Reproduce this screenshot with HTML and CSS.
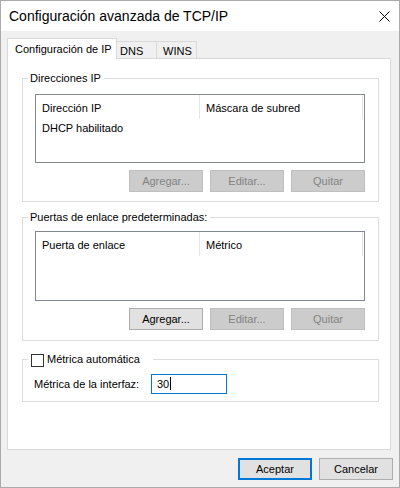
FILE: index.html
```html
<!DOCTYPE html>
<html lang="es">
<head>
    <meta charset="UTF-8">
    <title>Configuración avanzada de TCP/IP</title>
    <meta name="viewport" content="width=device-width">
    <link rel="stylesheet" href="styles.css">
</head>
<body>
    <div class="window">
        <div class="titlebar">
            <span class="title">Configuración avanzada de TCP/IP</span>
            <svg class="close" width="11" height="11" viewBox="0 0 11 11">
                <path d="M0.5 0.5 L10.5 10.5 M10.5 0.5 L0.5 10.5" stroke="#000" stroke-width="1" fill="none"/>
            </svg>
        </div>

        <div class="body">
            <div class="tabs">
                <div class="tab active">Configuración de IP</div>
                <div class="tab tab-dns">DNS</div>
                <div class="tab tab-wins">WINS</div>
            </div>

            <div class="panel">
                <fieldset class="group group-ip">
                    <legend>Direcciones IP</legend>
                    <div class="group-inner">
                        <div class="list list-ip">
                            <div class="list-head">
                                <span class="col col-a">Dirección IP</span>
                                <span class="col col-b">Máscara de subred</span>
                            </div>
                            <div class="list-row">DHCP habilitado</div>
                        </div>
                        <div class="btn-row">
                            <button class="btn" disabled>Agregar...</button>
                            <button class="btn" disabled>Editar...</button>
                            <button class="btn" disabled>Quitar</button>
                        </div>
                    </div>
                </fieldset>

                <fieldset class="group group-gw">
                    <legend>Puertas de enlace predeterminadas:</legend>
                    <div class="group-inner">
                        <div class="list list-gw">
                            <div class="list-head">
                                <span class="col col-a">Puerta de enlace</span>
                                <span class="col col-b">Métrico</span>
                            </div>
                        </div>
                        <div class="btn-row">
                            <button class="btn">Agregar...</button>
                            <button class="btn" disabled>Editar...</button>
                            <button class="btn" disabled>Quitar</button>
                        </div>
                    </div>
                </fieldset>

                <fieldset class="group group-metric">
                    <legend class="check-legend">
                        <span class="check"></span>
                        <span>Métrica automática</span>
                    </legend>
                    <div class="group-inner metric-row">
                        <label for="input-metric" class="metric-label">Métrica de la interfaz:</label>
                        <div class="metric-input" id="input-metric">30<span class="caret"></span></div>
                    </div>
                </fieldset>
            </div>

            <div class="footer">
                <button class="btn btn-default">Aceptar</button>
                <button class="btn">Cancelar</button>
            </div>
        </div>
    </div>
</body>
</html>
```

FILE: styles.css
```css
*,
*::after,
*::before{
    padding: 0;
    margin: 0;
    box-sizing: border-box;
}
html{
    font: normal 11px/15px "Liberation Sans", sans-serif;
    color: #000;
}
body{
    background: #fff;
}
.window{
    width: 400px;
    height: 488px;
    border: 1px solid #aaaaaa;
    display: flex;
    flex-direction: column;
}
.titlebar{
    height: 30px;
    background: #fff;
    display: flex;
    align-items: center;
    justify-content: space-between;
    padding: 0 9px 0 8px;
}
.title{
    font-size: 14px;
}
.close{
    display: block;
}
.body{
    flex: 1;
    background: #f0f0f0;
    padding: 7px 6px 0 6px;
}

/* tabs */
.tabs{
    display: flex;
    align-items: flex-end;
    height: 20px;
}
.tab{
    height: 17px;
    background: #f0f0f0;
    border: 1px solid #d9d9d9;
    border-left: none;
    border-bottom: none;
    padding-top: 2px;
    white-space: nowrap;
}
.tab.active{
    height: 21px;
    width: 110px;
    margin-bottom: -1px;
    border-left: 1px solid #d9d9d9;
    background: #fff;
    padding: 3px 0 0 7px;
    position: relative;
    z-index: 1;
}
.tab-dns{
    width: 40px;
    padding-left: 3px;
}
.tab-wins{
    width: 40px;
    padding-left: 6px;
}
.panel{
    width: 384px;
    height: 392px;
    background: #fff;
    border: 1px solid #d9d9d9;
    padding: 0 11px 0 14px;
}

/* group boxes */
.group{
    border: 1px solid #dcdcdc;
    padding: 0;
    min-width: 0;
}
.group legend{
    margin-left: 5px;
    padding: 0 3px 0 2px;
    line-height: 15px;
}
.group-inner{
    padding: 0 13px 9px 12px;
}
.group-ip{
    margin-top: 12px;
}
.group-gw{
    margin-top: 8px;
}
.group-gw .group-inner{
    padding-bottom: 10px;
}
.group-metric{
    margin-top: 11px;
}
.group .check-legend{
    display: flex;
    align-items: center;
    padding: 0 13px 0 3px;
}
.check{
    width: 13px;
    height: 13px;
    border: 1px solid #333;
    background: #fff;
    margin-right: 3px;
    margin-top: 1px;
}

/* list views */
.list{
    border: 1px solid #828790;
    background: #fff;
}
.list-ip{
    margin-top: 8px;
    height: 69px;
}
.list-gw{
    margin-top: 6px;
    height: 70px;
}
.list-head{
    display: flex;
    height: 24px;
}
.col{
    border-right: 1px solid #e5e5e5;
    padding: 6px 0 0 6px;
}
.col-a{
    width: 164px;
}
.col-b{
    width: 163px;
}
.list-row{
    padding: 2px 0 0 6px;
}

/* buttons */
.btn-row{
    display: flex;
    justify-content: flex-end;
    gap: 7px;
    margin-top: 7px;
}
.btn{
    width: 74px;
    height: 22px;
    font: inherit;
    color: #000;
    background: #e1e1e1;
    border: 1px solid #adadad;
}
.btn:disabled{
    background: #cccccc;
    border-color: #bfbfbf;
    color: #838383;
}
.btn-default{
    border: 2px solid #0078d7;
}

/* metric row */
.metric-row{
    display: flex;
    align-items: center;
    padding: 7px 0 7px 11px;
}
.metric-label{
    width: 117px;
}
.metric-input{
    width: 76px;
    height: 20px;
    border: 1px solid #0078d7;
    padding: 2px 0 0 5px;
    display: flex;
    align-items: flex-start;
}
.caret{
    display: inline-block;
    width: 1px;
    height: 13px;
    background: #000;
    margin-left: 1px;
}

.footer{
    display: flex;
    justify-content: flex-end;
    gap: 7px;
    margin-top: 8px;
}
```
